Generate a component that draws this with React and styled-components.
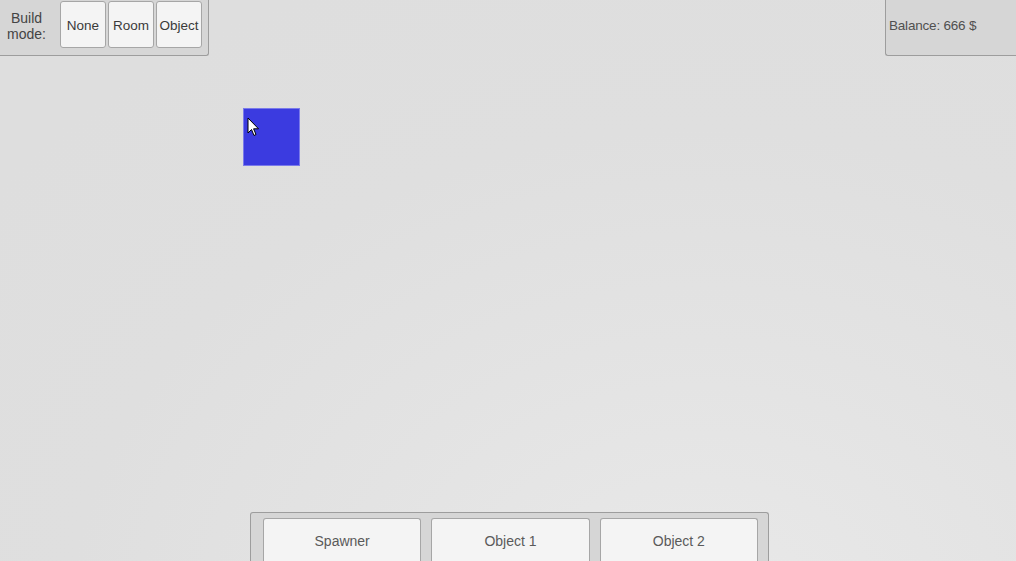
import React from "react";
import styled, { createGlobalStyle } from "styled-components";

const Global = createGlobalStyle`
  html, body { margin: 0; padding: 0; }
  body {
    width: 1016px;
    height: 561px;
    overflow: hidden;
    font-family: "Liberation Sans", Arial, sans-serif;
    background: radial-gradient(ellipse 900px 700px at 700px 620px, #e9e9e9 0%, #e3e3e3 40%, #dfdfdf 70%, #dedede 100%);
  }
`;

const Screen = styled.div`
  position: relative;
  width: 1016px;
  height: 561px;
  display: flex;
  flex-direction: column;
  justify-content: space-between;
  overflow: hidden;
`;

const TopBar = styled.div`
  display: flex;
  justify-content: space-between;
  align-items: flex-start;
`;

const Panel = styled.div`
  box-sizing: border-box;
  background: #d6d6d6;
  border: 1px solid #9d9d9d;
  height: 56px;
  display: flex;
  align-items: center;
`;

const BuildPanel = styled(Panel)`
  width: 209px;
  border-left: none;
  border-top: none;
  border-bottom-right-radius: 3px;
  padding: 1px 0 7px 0;
  align-items: stretch;
  gap: 2px;
`;

const Label = styled.div`
  width: 60px;
  display: flex;
  align-items: center;
  justify-content: center;
  text-align: center;
  font-size: 14px;
  line-height: 16px;
  color: #444;
  margin-right: -2px;
  padding: 2px 7px 0 0;
  box-sizing: border-box;
`;

const Button = styled.div`
  box-sizing: border-box;
  background: #f4f4f4;
  border: 1px solid #a6a6a6;
  border-radius: 3px;
  display: flex;
  align-items: center;
  justify-content: center;
  padding-top: ${(p) => (p.$small ? "2px" : "0")};
  font-size: ${(p) => (p.$small ? "13.5px" : "14px")};
  color: ${(p) => (p.$small ? "#3a3a3a" : "#5a5a5a")};
  width: ${(p) => p.$w}px;
`;

const BalancePanel = styled(Panel)`
  width: 131px;
  border-right: none;
  border-top: none;
  border-bottom-left-radius: 3px;
  padding: 0 0 5px 3px;
  font-size: 13.5px;
  color: #505050;
  letter-spacing: -0.2px;
`;

const BottomRow = styled.div`
  display: flex;
  justify-content: flex-start;
  padding-left: 250px;
`;

const BottomPanel = styled.div`
  box-sizing: border-box;
  width: 519px;
  height: 49px;
  background: #d6d6d6;
  border: 1px solid #9d9d9d;
  border-bottom: none;
  border-radius: 3px 3px 0 0;
  padding: 5px 10px 0 12px;
  display: flex;
  gap: 10px;
  align-items: stretch;
`;

const ObjButton = styled(Button)`
  flex: 1;
  border-bottom: none;
  border-radius: 3px 3px 0 0;
  align-items: flex-start;
  padding-top: 14px;
`;

const Block = styled.div`
  position: absolute;
  left: 243px;
  top: 108px;
  width: 57px;
  height: 58px;
  box-sizing: border-box;
  background: #3b3be0;
  border: 1px solid #7a7aea;
`;

const Cursor = styled.svg`
  position: absolute;
  left: 247px;
  top: 117px;
`;

export default function App() {
  return (
    <>
      <Global />
      <Screen>
        <TopBar>
          <BuildPanel>
            <Label>Build<br />mode:</Label>
            <Button $small $w={46}>None</Button>
            <Button $small $w={46}>Room</Button>
            <Button $small $w={46}>Object</Button>
          </BuildPanel>
          <BalancePanel>Balance: 666 $</BalancePanel>
        </TopBar>
        <BottomRow>
          <BottomPanel>
            <ObjButton>Spawner</ObjButton>
            <ObjButton>Object 1</ObjButton>
            <ObjButton>Object 2</ObjButton>
          </BottomPanel>
        </BottomRow>
        <Block />
        <Cursor width="13" height="21" viewBox="0 0 13 21">
          <path d="M1 1 L1 16 L4.5 12.5 L7 18.5 L9 17.5 L6.6 11.8 L11.5 11.8 Z" fill="#fff" stroke="#000" strokeWidth="1" strokeLinejoin="miter" />
        </Cursor>
      </Screen>
    </>
  );
}
